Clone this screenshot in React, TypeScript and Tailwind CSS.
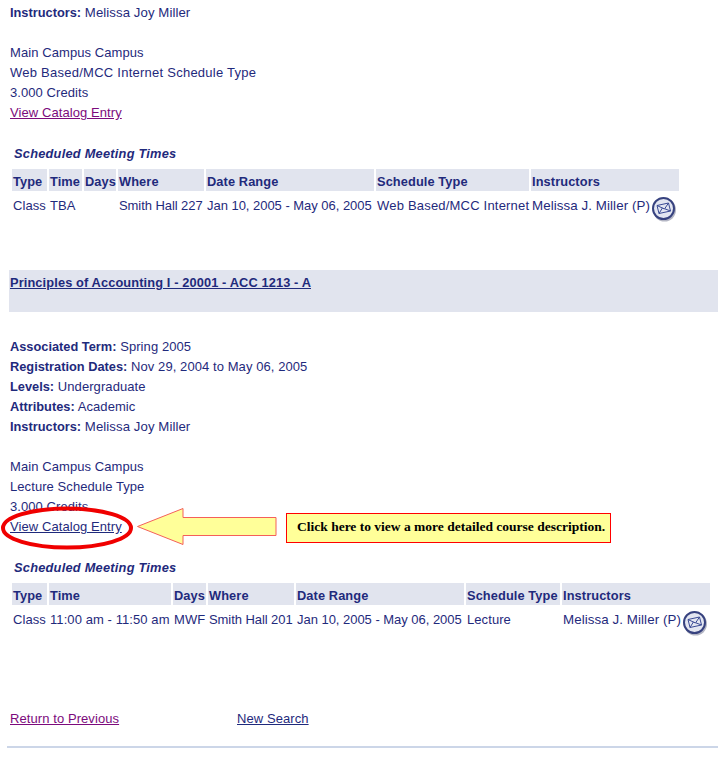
const Mail = () => (
  <svg width="26" height="26" viewBox="0 0 26 26" className="shrink-0">
    <circle cx="13.5" cy="14" r="11.5" fill="#b4b6c4" />
    <circle cx="12.5" cy="12.5" r="10.5" fill="#e3e6f1" stroke="#37427f" strokeWidth="2" />
    <path d="M6 9.5 L17.5 7 L19.5 15 L8 17.5 Z M6 9.5 L13.5 13 L17.5 7 M8 17.5 L11.5 11.8 M19.5 15 L13.8 12.8" fill="none" stroke="#3a4a94" strokeWidth="1" />
  </svg>
);

const Line = ({ children }: { children?: React.ReactNode }) => (
  <div className="h-5 leading-[21px] whitespace-nowrap">{children}</div>
);

const L = ({ children }: { children: React.ReactNode }) => <b className="font-bold text-[12.8px] tracking-normal">{children}</b>;

const headStyle = "h-[22px] bg-[#e1e4ee] font-bold text-[12.8px] leading-[25px] pl-px whitespace-nowrap tracking-[0.1px]";

type Cell = [string, string];

function MeetingTable({ grid, heads, cells }: { grid: string; heads: string[]; cells: Cell[] }) {
  return (
    <div className={`grid gap-x-[2px] ${grid}`}>
      {heads.map((h) => (
        <div key={h} className={headStyle}>{h}</div>
      ))}
      {cells.map(([c, cls], i) => (
        <div key={i} className="pl-px whitespace-nowrap leading-[21px] flex items-start pt-[4px] h-[40px]">
          <span className={cls}>{c}</span>
          {i === cells.length - 1 && <span className="ml-px mt-[1px]"><Mail /></span>}
        </div>
      ))}
    </div>
  );
}

const Title = () => (
  <div className="pl-[4px] h-5 leading-[21px] font-bold italic text-[12.8px] tracking-[0.24px]">Scheduled Meeting Times</div>
);

const date = "tracking-[-0.03px]";
const where = "tracking-[-0.07px]";
const inst = "text-[13.33px]";

export default function App() {
  return (
    <div className="relative w-[718px] h-[758px] overflow-hidden bg-white text-[13px] text-[#1f2a7c] font-['Liberation_Sans',Arial,sans-serif] tracking-[0.08px]">
      <div className="pt-[2px] pl-[10px]">
        <Line><L>Instructors:</L> <span className="text-[13.2px]">Melissa Joy Miller</span></Line>
        <Line />
        <Line>Main Campus Campus</Line>
        <Line><span className="tracking-[0.25px]">Web Based/MCC Internet Schedule Type</span></Line>
        <Line>3.000 Credits</Line>
        <Line><a className="text-[#7c0a7c] underline">View Catalog Entry</a></Line>
        <div className="h-[21px]" />
        <Title />
      </div>
      <div className="pl-[12px] mt-[6px]">
        <MeetingTable
          grid="grid-cols-[35px_33px_32px_86px_168px_153px_148px]"
          heads={["Type", "Time", "Days", "Where", "Date Range", "Schedule Type", "Instructors"]}
          cells={[["Class", ""], ["TBA", ""], ["", ""], ["Smith Hall 227", where], ["Jan 10, 2005 - May 06, 2005", date], ["Web Based/MCC Internet", "tracking-[0.2px]"], ["Melissa J. Miller (P)", inst]]}
        />
      </div>

      <div className="ml-[9px] mt-[39px] h-[42px] bg-[#e1e4ee] pl-px pt-[2px]">
        <div className="leading-[21px] font-bold text-[12.8px] underline tracking-[0.12px]">Principles of Accounting I - 20001 - ACC 1213 - A</div>
      </div>

      <div className="pt-[24px] pl-[10px]">
        <Line><L>Associated Term:</L> Spring 2005</Line>
        <Line><L>Registration Dates:</L> Nov 29, 2004 to May 06, 2005</Line>
        <Line><L>Levels:</L> Undergraduate</Line>
        <Line><L>Attributes:</L> Academic</Line>
        <Line><L>Instructors:</L> <span className="text-[13.2px]">Melissa Joy Miller</span></Line>
        <Line />
        <Line>Main Campus Campus</Line>
        <Line>Lecture Schedule Type</Line>
        <Line>3.000 Credits</Line>
        <Line><a className="underline">View Catalog Entry</a></Line>
        <div className="h-[21px]" />
        <Title />
      </div>
      <div className="pl-[12px] mt-[6px]">
        <MeetingTable
          grid="grid-cols-[35px_122px_33px_86px_168px_94px_148px]"
          heads={["Type", "Time", "Days", "Where", "Date Range", "Schedule Type", "Instructors"]}
          cells={[["Class", ""], ["11:00 am - 11:50 am", ""], ["MWF", ""], ["Smith Hall 201", where], ["Jan 10, 2005 - May 06, 2005", date], ["Lecture", ""], ["Melissa J. Miller (P)", inst]]}
        />
      </div>

      <div className="flex pl-[10px] mt-[63px] h-5 leading-[21px]">
        <a className="w-[227px] text-[#7c0a7c]"><span className="underline">Return to Previous</span></a>
        <a className="underline">New Search</a>
      </div>
      <div className="ml-[7px] mt-[18px] h-[2px] bg-[#ccd6e8]" />

      <svg className="absolute left-0 top-[500px]" width="285" height="56" viewBox="0 0 285 56">
        <ellipse cx="67" cy="28" rx="64" ry="19.5" fill="none" stroke="#f00000" strokeWidth="4" />
        <path d="M137.5 26.5 L183 8.5 L183 17.5 L276 17.5 L276 35.5 L183 35.5 L183 44.5 Z" fill="#ffff99" stroke="#f4605a" strokeWidth="1" />
      </svg>
      <div className="absolute left-[286px] top-[513px] w-[325px] h-[30px] border border-[#ff0000] bg-[#ffff99] pl-[10px] leading-[26px] text-[13.5px] font-bold text-black font-['Liberation_Serif','Times_New_Roman',serif] whitespace-nowrap tracking-normal">
        Click here to view a more detailed course description.
      </div>
    </div>
  );
}
